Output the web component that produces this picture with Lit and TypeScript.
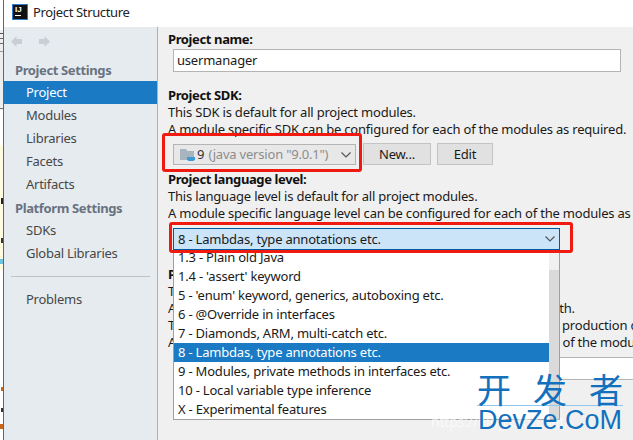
import { LitElement, html, css } from "lit";
import { customElement } from "lit/decorators.js";

const LEVELS = [
  "1.3 - Plain old Java",
  "1.4 - 'assert' keyword",
  "5 - 'enum' keyword, generics, autoboxing etc.",
  "6 - @Override in interfaces",
  "7 - Diamonds, ARM, multi-catch etc.",
  "8 - Lambdas, type annotations etc.",
  "9 - Modules, private methods in interfaces etc.",
  "10 - Local variable type inference",
  "X - Experimental features",
];
const chevron = html`<svg class="chev" width="12" height="8" viewBox="0 0 12 8"><path d="M1.5 1.5 6 6l4.5-4.5" fill="none" stroke="#555" stroke-width="1.2"/></svg>`;

@customElement("app-root")
export class AppRoot extends LitElement {
  static styles = css`
    :host { display: block; width: 633px; height: 440px; overflow: hidden; font: 13px "Noto Sans", sans-serif; letter-spacing: -0.2px; color: #1a1a1a; }
    .page { position: relative; width: 633px; height: 440px; overflow: hidden; display: flex; background: #fff; }
    .desk {
      width: 3px; flex: none;
      background:
        linear-gradient(#555, #555) 0 33px / 3px 1px no-repeat,
        linear-gradient(#666, #666) 0 38px / 3px 1px no-repeat,
        linear-gradient(#666, #666) 0 43px / 3px 1px no-repeat,
        linear-gradient(#999, #999) 0 51px / 3px 1px no-repeat,
        linear-gradient(#777, #777) 0 108px / 3px 1px no-repeat,
        linear-gradient(#222, #222) 1px 198px / 2px 6px no-repeat,
        linear-gradient(#333, #333) 1px 238px / 2px 5px no-repeat,
        linear-gradient(#6cc4e0, #6cc4e0) 0 259px / 3px 5px no-repeat,
        linear-gradient(#c8661c, #c8661c) 1px 387px / 2px 4px no-repeat,
        linear-gradient(#333, #333) 1px 408px / 2px 4px no-repeat,
        linear-gradient(#c8661c, #c8661c) 0 424px / 3px 5px no-repeat,
        linear-gradient(#fffbe0, #fffbe0) 0 145px / 3px 125px no-repeat,
        linear-gradient(#eeeeee, #eeeeee) 0 30px / 3px 80px no-repeat,
        #fff;
    }
    .win { flex: 1; display: flex; flex-direction: column; border-left: 1px solid #1a7ac4; min-width: 0; }
    .title { height: 27px; flex: none; box-sizing: border-box; padding: 0 0 3px 8px; display: flex; align-items: center; gap: 5px; background: #fff; color: #222; letter-spacing: -0.35px; }
    .ij { width: 16px; height: 16px; box-sizing: border-box; background: #111; border: 1px solid #2a7fd0; display: flex; flex-direction: column; color: #fff; font: bold 8px/9px "Liberation Sans", sans-serif; letter-spacing: 0; padding: 0 0 0 2px; }
    .ij i { display: block; width: 6px; height: 1px; background: #fff; margin-top: 1px; }
    .main { flex: 1; display: flex; min-height: 0; }
    .side { width: 153px; flex: none; background: #e6ebf0; border-right: 1px solid #b0b0b0; display: flex; flex-direction: column; color: #474747; letter-spacing: -0.25px; }
    .nav { height: 29px; display: flex; align-items: center; gap: 15px; padding-left: 6px; margin-bottom: 2px; }
    .hd { height: 23px; line-height: 25px; padding-left: 11px; font-weight: 700; color: #6a7280; letter-spacing: -0.38px; }
    .it { height: 23px; line-height: 22px; padding-left: 22px; }
    .it.sel { background: #1a7ac4; color: #fff; }
    .sep { height: 1px; background: #c0c2c4; margin: 11px 7px; }
    .content { flex: 1; min-width: 0; background: #f0f0f0; padding: 4px 0 0 10px; white-space: nowrap; overflow: hidden; line-height: 17px; }
    .b { font-weight: 700; color: #111; letter-spacing: -0.38px; }
    .tight { letter-spacing: -0.24px; }
    .input { width: 448px; height: 23px; margin: 1px 0 15px 5px; background: #fff; border: 1px solid #b4b4b4; box-sizing: border-box; line-height: 20px; padding-left: 3px; }
    .input.out { width: 480px; margin: 6px 0 0 5px; }
    .row { display: flex; align-items: flex-end; margin: 5px 0 6px 5px; height: 22px; }
    .combo { box-sizing: border-box; border: 1px solid #b4b4b4; display: flex; align-items: center; }
    .sdk { width: 183px; height: 21px; background: #e8e8e8; color: #8c8c8c; padding-left: 6px; gap: 1px; margin-right: 7px; }
    .sdk .nine { color: #333; }
    .chev { margin-left: auto; margin-right: 3px; }
    .btn { height: 22px; box-sizing: border-box; border: 1px solid #c4c4c4; background: #e1e1e1; display: flex; align-items: center; justify-content: center; color: #1a1a1a; }
    .new { width: 68px; margin-right: 6px; }
    .edit { width: 56px; }
    .lang { margin: 6px 0 16px 5px; width: 387px; height: 22px; background: #cce4f7; border: 1px solid #005a9e; padding-left: 4px; }
    .popup { position: absolute; left: 173px; top: 250px; width: 387px; height: 170px; background: #fff; border: 1px solid #a0a0a0; border-top: 0; box-sizing: border-box; line-height: 19px; display: flex; white-space: nowrap; overflow: hidden; }
    .opts { flex: 1; min-width: 0; margin-top: -2px; }
    .opt { height: 19px; padding-left: 4px; }
    .opt.sel { background: #1a7ac4; color: #fff; }
    .track { width: 10px; flex: none; background: #f0f0f0; }
    .thumb { width: 10px; height: 100%; margin-top: 20px; background: #dadada; }
    .mark { position: absolute; border: 3px solid #f01a10; border-radius: 3px; box-sizing: border-box; }
    .m1 { left: 162px; top: 133px; width: 200px; height: 39px; }
    .m2 { left: 169px; top: 222px; width: 404px; height: 31px; }
    .wm { position: absolute; left: 477px; top: 372px; width: 146px; color: #1270bd; }
    .cn { display: flex; justify-content: space-between; font: 400 34px/34px "Noto Sans CJK SC", sans-serif; height: 33px; letter-spacing: 0; }
    .en { font: 27px/28px "Liberation Sans", sans-serif; border-top: 1px solid #8fc8ee; letter-spacing: 0; text-align: center; }
    .faint { position: absolute; left: 431px; top: 412px; color: rgba(255,255,255,.7); font-size: 14px; }
  `;
  render() {
    return html`<div class="page">
      <div class="desk"></div>
      <div class="win">
        <div class="title"><span class="ij">IJ<i></i></span>Project Structure</div>
        <div class="main">
          <div class="side">
            <div class="nav">
              <svg width="13" height="13" viewBox="0 0 13 13"><path d="M6.500 1 1 6.500 6.500 12V9H12V4H6.500z" fill="#c9cfd5"/></svg>
              <svg width="13" height="13" viewBox="0 0 13 13"><path d="M6.500 1 12 6.500 6.500 12V9H1V4h5.500z" fill="#c9cfd5"/></svg>
            </div>
            <div class="hd">Project Settings</div>
            <div class="it sel">Project</div>
            <div class="it">Modules</div>
            <div class="it">Libraries</div>
            <div class="it">Facets</div>
            <div class="it">Artifacts</div>
            <div class="hd">Platform Settings</div>
            <div class="it">SDKs</div>
            <div class="it">Global Libraries</div>
            <div class="sep"></div>
            <div class="it">Problems</div>
          </div>
          <div class="content">
            <div class="b">Project name:</div>
            <div class="input">usermanager</div>
            <div class="b">Project SDK:</div>
            <div>This SDK is default for all project modules.</div>
            <div>A module specific SDK can be configured for each of the modules as required.</div>
            <div class="row">
              <div class="combo sdk">
                <svg width="16" height="14" viewBox="0 0 16 14"><path d="M0 1h6l1.500 2H14v9H0z" fill="#a8b4be"/><path d="M7 9h8v2.500l-1.500 1.500H8.500L7 11.500z" fill="#3d9ad6"/></svg>
                <span class="nine">9</span>&nbsp;(java version "9.0.1")${chevron}
              </div>
              <div class="btn new">New...</div>
              <div class="btn edit">Edit</div>
            </div>
            <div class="b">Project language level:</div>
            <div>This language level is default for all project modules.</div>
            <div>A module specific language level can be configured for each of the modules as required.</div>
            <div class="combo lang">8 - Lambdas, type annotations etc.${chevron}</div>
            <div class="b">Project compiler output:</div>
            <div>This path is used to store all project compilation results.</div>
            <div>A directory corresponding to each module is created under this path.</div>
            <div>This directory contains two subdirectories: Production and Test for production code and test sources, respectively.</div>
            <div class="tight">A module specific compiler output path can be configured for each of the modules as required.</div>
            <div class="input out"></div>
          </div>
        </div>
      </div>
      <div class="popup">
        <div class="opts">${LEVELS.map((l) => html`<div class="opt ${l.startsWith("8") ? "sel" : ""}">${l}</div>`)}</div>
        <div class="track"><div class="thumb"></div></div>
      </div>
      <div class="mark m1"></div>
      <div class="mark m2"></div>
      <div class="faint">https://blog.csdn.net/</div>
      <div class="wm"><div class="cn"><span>开</span><span>发</span><span>者</span></div><div class="en">DevZe.CoM</div></div>
    </div>`;
  }
}
